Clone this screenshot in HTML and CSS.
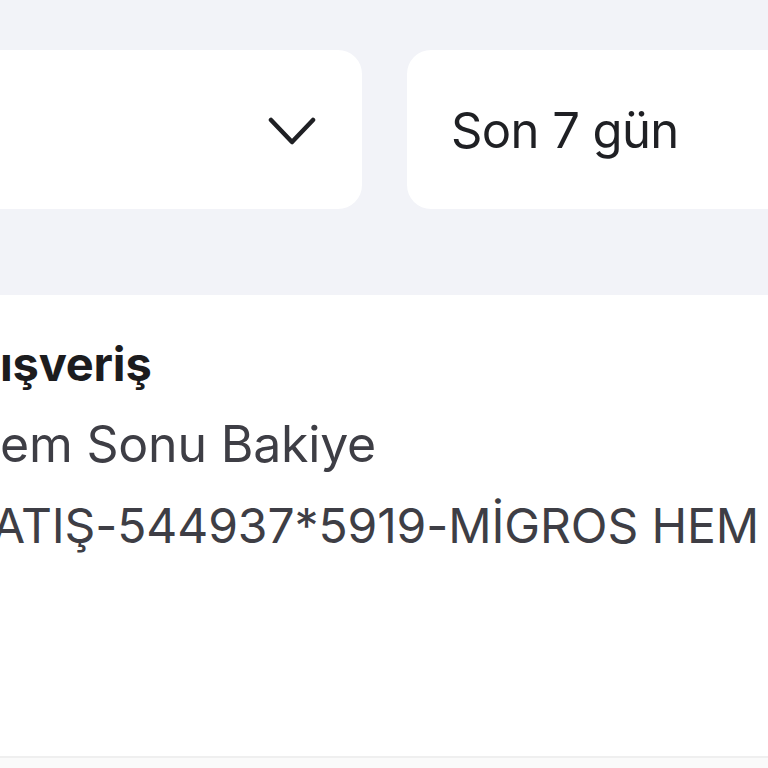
FILE: index.html
```html
<!DOCTYPE html>
<html lang="tr">
<head>
<meta charset="utf-8">
<link rel="stylesheet" href="styles.css">
</head>
<body>
<div class="screen">
  <section class="filters">
    <div class="select select-account">
      <svg class="chevron" width="48" height="30" viewBox="0 0 48 30" aria-hidden="true">
        <path d="M3 3 L24 25 L45 3" fill="none" stroke="#1f2024" stroke-width="4.5" stroke-linecap="round" stroke-linejoin="round"/>
      </svg>
    </div>
    <div class="select select-period">
      <span class="select-label">Son 7 gün</span>
    </div>
  </section>
  <section class="list">
    <div class="tx">
      <div class="tx-title">ışveriş</div>
      <div class="tx-sub">em Sonu Bakiye</div>
      <div class="tx-desc">ATIŞ-544937*5919-MİGROS HEM</div>
    </div>
  </section>
  <div class="divider"></div>
  <section class="below"></section>
</div>
</body>
</html>
```

FILE: styles.css
```css
html, body {
  margin: 0;
  padding: 0;
  background: #ffffff;
}

.screen {
  width: 768px;
  height: 768px;
  overflow: hidden;
  font-family: Inter, "Noto Sans", "Liberation Sans", sans-serif;
  display: flex;
  flex-direction: column;
}

.filters {
  background: #f2f3f8;
  height: 295px;
  box-sizing: border-box;
  padding-top: 50px;
  display: flex;
  gap: 45px;
  flex-shrink: 0;
}

.select {
  background: #ffffff;
  border-radius: 24px;
  height: 159px;
  display: flex;
  align-items: center;
  flex-shrink: 0;
  box-sizing: border-box;
}

.select-account {
  width: 400px;
  margin-left: -38px;
  justify-content: flex-end;
  padding-right: 46px;
}

.chevron {
  display: block;
  margin-top: 4px;
}

.select-period {
  width: 420px;
  padding-left: 44px;
}

.select-label {
  font-size: 49px;
  color: #1f2024;
  letter-spacing: -0.6px;
  margin-top: 2px;
}

.list {
  background: #ffffff;
  height: 461px;
  flex-shrink: 0;
  box-sizing: border-box;
  padding-top: 29px;
  overflow: hidden;
}

.tx {
  white-space: nowrap;
}

.tx-title {
  font-size: 47px;
  font-weight: 700;
  color: #1c1c1e;
  line-height: 80px;
  letter-spacing: -0.2px;
}

.tx-sub,
.tx-desc {
  color: #3e3e45;
  line-height: 81px;
}

.tx-sub {
  font-size: 50px;
  letter-spacing: -0.2px;
}

.tx-desc {
  font-size: 48px;
  letter-spacing: -0.1px;
  font-feature-settings: "calt" 0;
  margin-left: -8px;
}

.divider {
  height: 2px;
  background: #efefef;
  flex-shrink: 0;
}

.below {
  flex: 1;
  background: #fafafa;
}
```
